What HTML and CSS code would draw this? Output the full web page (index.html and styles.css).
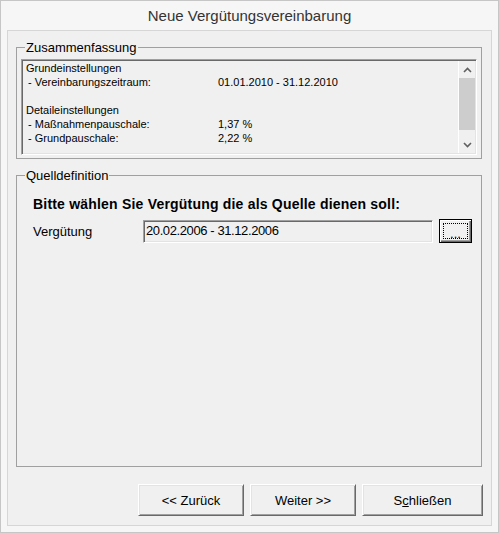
FILE: index.html
```html
<!DOCTYPE html>
<html lang="de">
<head>
    <meta charset="UTF-8">
    <meta name="viewport" content="width=device-width, initial-scale=1.0">
    <title>Neue Vergütungsvereinbarung</title>
    <link rel="stylesheet" href="styles.css">
</head>
<body>
    <div class="window">
        <div class="title">Neue Vergütungsvereinbarung</div>

        <div class="panel">
            <fieldset class="group group-summary">
                <legend>Zusammenfassung</legend>
                <div class="listbox">
                    <div class="summary">
                        <div class="summary-head">Grundeinstellungen</div>
                        <div class="summary-row"><span>- Vereinbarungszeitraum:</span><span>01.01.2010 - 31.12.2010</span></div>
                        <div class="summary-gap"></div>
                        <div class="summary-head">Detaileinstellungen</div>
                        <div class="summary-row"><span>- Maßnahmenpauschale:</span><span>1,37 %</span></div>
                        <div class="summary-row"><span>- Grundpauschale:</span><span>2,22 %</span></div>
                    </div>
                    <div class="scrollbar">
                        <div class="scroll-btn">
                            <svg width="9" height="6" viewBox="0 0 9 6"><polyline points="1,5 4.5,1.5 8,5" fill="none" stroke="#606060" stroke-width="1.6"/></svg>
                        </div>
                        <div class="scroll-track"><div class="scroll-thumb"></div></div>
                        <div class="scroll-btn">
                            <svg width="9" height="6" viewBox="0 0 9 6"><polyline points="1,1 4.5,4.5 8,1" fill="none" stroke="#606060" stroke-width="1.6"/></svg>
                        </div>
                    </div>
                </div>
            </fieldset>

            <fieldset class="group group-source">
                <legend>Quelldefinition</legend>
                <div class="source-body">
                    <p class="prompt">Bitte wählen Sie Vergütung die als Quelle dienen soll:</p>
                    <div class="field">
                        <span class="field-label">Vergütung</span>
                        <div class="field-input">20.02.2006 - 31.12.2006</div>
                        <button class="browse-btn"><span class="focus-ring">...</span></button>
                    </div>
                </div>
            </fieldset>

            <div class="actions">
                <button class="btn">&lt;&lt; Zurück</button>
                <button class="btn">Weiter &gt;&gt;</button>
                <button class="btn btn-wide">S<u>c</u>hließen</button>
            </div>
        </div>
    </div>
</body>
</html>
```

FILE: styles.css
```css
body {
    margin: 0;
    font-family: 'Liberation Sans', Arial, sans-serif;
    font-size: 13px;
    color: #000;
    background-color: #fff;
}

.window {
    box-sizing: border-box;
    width: 499px;
    height: 533px;
    border: 1px solid #c6c6c6;
    background-color: #f6f6f6;
}

.title {
    height: 29px;
    line-height: 29px;
    text-align: center;
    font-size: 15px;
    color: #333;
}

.panel {
    box-sizing: border-box;
    height: 496px;
    margin: 0 6px;
    padding: 9px 9px 8px 8px;
    border: 1px solid #d6d6d6;
    background-color: #f0f0f0;
}

.group {
    box-sizing: border-box;
    margin: 0;
    padding: 4px 4px 3px;
    border: 1px solid #a0a0a0;
    min-width: 0;
}

.group legend {
    margin-left: 4px;
    padding: 0 1px;
    font-size: 13px;
    line-height: 15px;
    color: #000;
}

.group-summary {
    height: 119px;
}

.group-source {
    height: 299px;
    margin-top: 9px;
}

/* list box with summary text */
.listbox {
    box-sizing: border-box;
    display: flex;
    height: 96px;
    border-top: 1px solid #a0a0a0;
    border-left: 1px solid #a0a0a0;
    border-right: 1px solid #fff;
    border-bottom: 1px solid #fff;
    box-shadow: inset 1px 1px 0 #696969, inset -1px -1px 0 #e3e3e3;
    padding: 1px;
}

.summary {
    flex: 1;
    padding-left: 3px;
    font-size: 11px;
    line-height: 14px;
}

.summary-row {
    display: grid;
    grid-template-columns: 190px auto;
    padding-left: 2px;
}

.summary-gap {
    height: 14px;
}

.scrollbar {
    display: flex;
    flex-direction: column;
    width: 17px;
    border-left: 1px solid #fff;
    box-sizing: border-box;
}

.scroll-btn {
    height: 17px;
    display: flex;
    align-items: center;
    justify-content: center;
}

.scroll-track {
    flex: 1;
}

.scroll-thumb {
    height: 52px;
    background-color: #cdcdcd;
}

/* source selection */
.source-body {
    padding: 9px 5px 0 12px;
}

.prompt {
    margin: 0;
    font-weight: bold;
    font-size: 14px;
    letter-spacing: 0.2px;
    line-height: 16px;
}

.field {
    display: flex;
    align-items: center;
    margin-top: 7px;
}

.field-label {
    width: 110px;
}

.field-input {
    box-sizing: border-box;
    width: 290px;
    height: 23px;
    line-height: 19px;
    padding: 0 2px;
    border-top: 1px solid #a0a0a0;
    border-left: 1px solid #a0a0a0;
    border-right: 1px solid #fff;
    border-bottom: 1px solid #fff;
    box-shadow: inset 1px 1px 0 #696969, inset -1px -1px 0 #e3e3e3;
    background-color: #f0f0f0;
    letter-spacing: -0.4px;
}

.browse-btn {
    box-sizing: border-box;
    width: 33px;
    height: 24px;
    margin-left: 6px;
    padding: 3px;
    border: 1px solid #000;
    background-color: #f0f0f0;
    box-shadow: inset 1px 1px 0 #fff, inset -1px -1px 0 #696969, inset -2px -2px 0 #a0a0a0;
    font-family: inherit;
    font-size: 13px;
}

.focus-ring {
    display: block;
    height: 100%;
    border: 1px dotted #000;
    box-sizing: border-box;
    line-height: 20px;
    text-align: center;
}

/* bottom buttons */
.actions {
    display: flex;
    justify-content: flex-end;
    gap: 6px;
    margin-top: 17px;
    margin-right: -1px;
}

.btn {
    box-sizing: border-box;
    width: 106px;
    height: 32px;
    padding: 0;
    border: none;
    border-top: 1px solid #fff;
    border-left: 1px solid #fff;
    border-right: 1px solid #696969;
    border-bottom: 1px solid #696969;
    box-shadow: inset 1px 1px 0 #e3e3e3, inset -1px -1px 0 #a0a0a0;
    background-color: #f0f0f0;
    font-family: inherit;
    font-size: 13px;
    color: #000;
}

.btn-wide {
    width: 121px;
}
```
